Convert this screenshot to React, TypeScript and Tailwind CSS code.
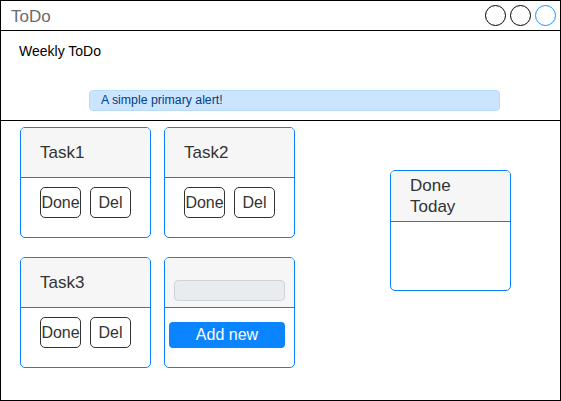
import React from "react";

const tasks = ["Task1", "Task2", "Task3"];

const TaskCard = ({ title }: { title: string }) => (
  <div className="w-[131px] h-[111px] border border-[#0a7fff] rounded-[5px] overflow-hidden flex flex-col">
    <div className="h-[50px] border-b border-[#0a7fff] bg-[#f6f6f6] flex items-center pl-[19px] text-[17px] text-[#333]">
      {title}
    </div>
    <div className="flex gap-[9px] pl-[19px] pt-[9px]">
      <button className="w-[41px] h-[31px] border border-[#333] rounded-[5px] text-[16px] text-[#333] flex items-center justify-center">
        Done
      </button>
      <button className="w-[41px] h-[31px] border border-[#333] rounded-[5px] text-[16px] text-[#333] flex items-center justify-center">
        Del
      </button>
    </div>
  </div>
);

const AddCard = () => (
  <div className="w-[131px] h-[111px] border border-[#0a7fff] rounded-[5px] overflow-hidden flex flex-col">
    <div className="h-[50px] border-b border-[#0a7fff] bg-[#f6f6f6] pl-[9px] pt-[22px]">
      <div className="w-[111px] h-[21px] bg-[#e9ecef] border border-[#ced4da] rounded-[4px]" />
    </div>
    <div className="pl-[4px] pt-[14px]">
      <button className="w-[116px] h-[26px] bg-[#0a85ff] rounded-[4px] text-white text-[16px] flex items-center justify-center">
        Add new
      </button>
    </div>
  </div>
);

export default function App() {
  return (
    <div className="w-[561px] h-[401px] border border-black bg-white flex flex-col font-['Liberation_Sans',Arial,sans-serif]">
      <div className="h-[30px] border-b border-black flex items-center justify-between pl-[10px] pr-[4px] shrink-0">
        <span className="text-[17px] text-[#6b6b6b] pt-[3px]">ToDo</span>
        <div className="flex gap-[4px]">
          <span className="w-[21px] h-[21px] rounded-full border border-black" />
          <span className="w-[21px] h-[21px] rounded-full border border-black" />
          <span className="w-[21px] h-[21px] rounded-full border border-[#1e90ff]" />
        </div>
      </div>

      <div className="h-[90px] border-b border-black shrink-0 flex flex-col pl-[18px] pt-[12px]">
        <p className="text-[14px] text-black leading-[17px]">Weekly ToDo</p>
        <div className="ml-[70px] mt-[30px] w-[411px] h-[21px] bg-[#cce5ff] border border-[#b8daff] rounded-[4px] flex items-center pl-[11px] text-[12.3px] text-[#004085]">
          A simple primary alert!
        </div>
      </div>

      <div className="flex pl-[19px] pt-[6px]">
        <div className="grid grid-cols-[131px_131px] gap-x-[13px] gap-y-[19px]">
          {tasks.map((t) => (
            <TaskCard key={t} title={t} />
          ))}
          <AddCard />
        </div>

        <div className="ml-[95px] mt-[43px] w-[121px] h-[121px] border border-[#0a7fff] rounded-[5px] overflow-hidden flex flex-col">
          <div className="h-[51px] border-b border-[#0a7fff] bg-[#f6f6f6] flex items-center pl-[19px]">
            <span className="w-[80px] text-[17px] leading-[21px] text-[#333]">Done Today</span>
          </div>
        </div>
      </div>
    </div>
  );
}
